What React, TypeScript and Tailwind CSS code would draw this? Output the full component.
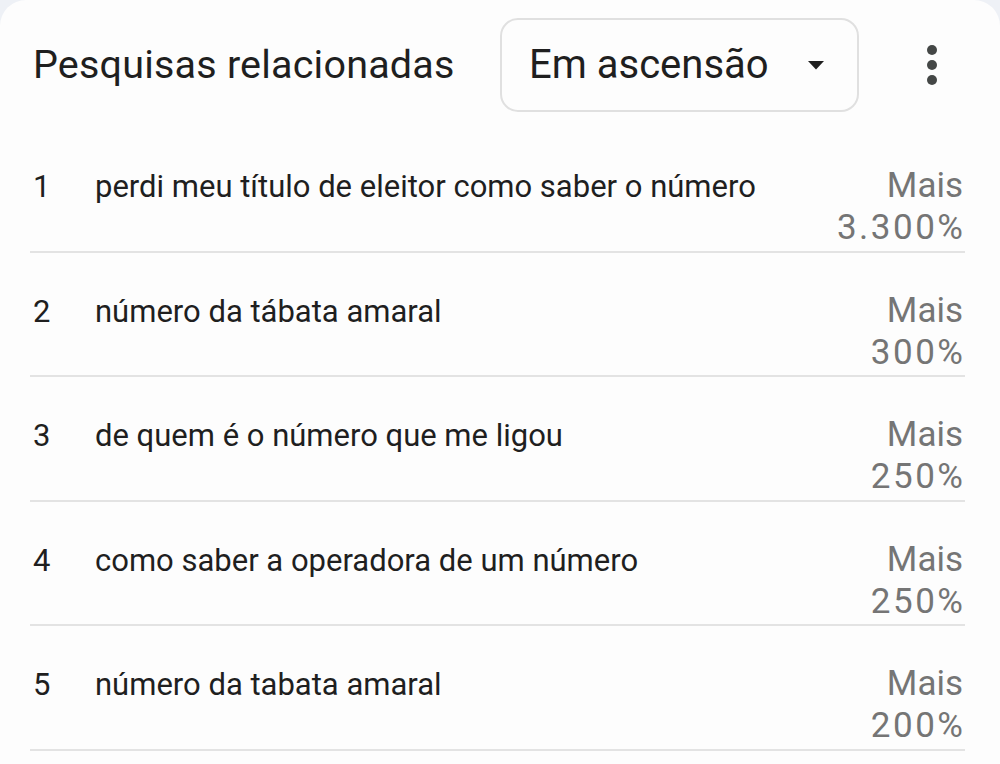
const rows = [
  { n: 1, q: 'perdi meu título de eleitor como saber o número', v: '3.300%' },
  { n: 2, q: 'número da tábata amaral', v: '300%' },
  { n: 3, q: 'de quem é o número que me ligou', v: '250%' },
  { n: 4, q: 'como saber a operadora de um número', v: '250%' },
  { n: 5, q: 'número da tabata amaral', v: '200%' },
];

export default function App() {
  return (
    <div className="min-h-screen bg-[#eef1f6] font-['Roboto',sans-serif]">
      <div className="min-h-screen rounded-t-[26px] bg-[#fdfdfd]">
        <div className="flex items-center pt-[18px] pb-[16px] pl-[33px]">
          <div className="w-[467px] text-[39.5px] leading-none tracking-[0.2px] text-[#1f1f1f]">
            Pesquisas relacionadas
          </div>
          <div className="flex h-[94px] w-[359px] items-center justify-between rounded-[18px] border-2 border-[#e0e0e0] pl-[27px] pr-[33px]">
            <span className="text-[40px] leading-none text-[#1f1f1f]">Em ascensão</span>
            <svg width="16" height="9" viewBox="0 0 16 9">
              <path d="M0 0h16L8 8.5z" fill="#1f1f1f" />
            </svg>
          </div>
          <div className="ml-[68px] flex flex-col gap-[5px]">
            <span className="h-[10px] w-[10px] rounded-full bg-[#444746]" />
            <span className="h-[10px] w-[10px] rounded-full bg-[#444746]" />
            <span className="h-[10px] w-[10px] rounded-full bg-[#444746]" />
          </div>
        </div>

        <div className="ml-[30px] mr-[35px]">
          {rows.map((r) => (
            <div
              key={r.n}
              className="box-border flex h-[124.5px] items-start border-b-2 border-[#e3e3e3] pt-[37px] pr-[2px] pl-[3px]"
            >
              <div className="w-[62px] text-[31px] leading-[44px] text-[#1f1f1f]">{r.n}</div>
              <div className="flex-1 text-[31px] leading-[44px] text-[#1f1f1f]">{r.q}</div>
              <div className="text-right text-[35px] leading-[42px] text-[#757575]">
                <div>Mais</div>
                <div className="-mr-[2.5px] tracking-[2.5px]">{r.v}</div>
              </div>
            </div>
          ))}
        </div>
      </div>
    </div>
  );
}
